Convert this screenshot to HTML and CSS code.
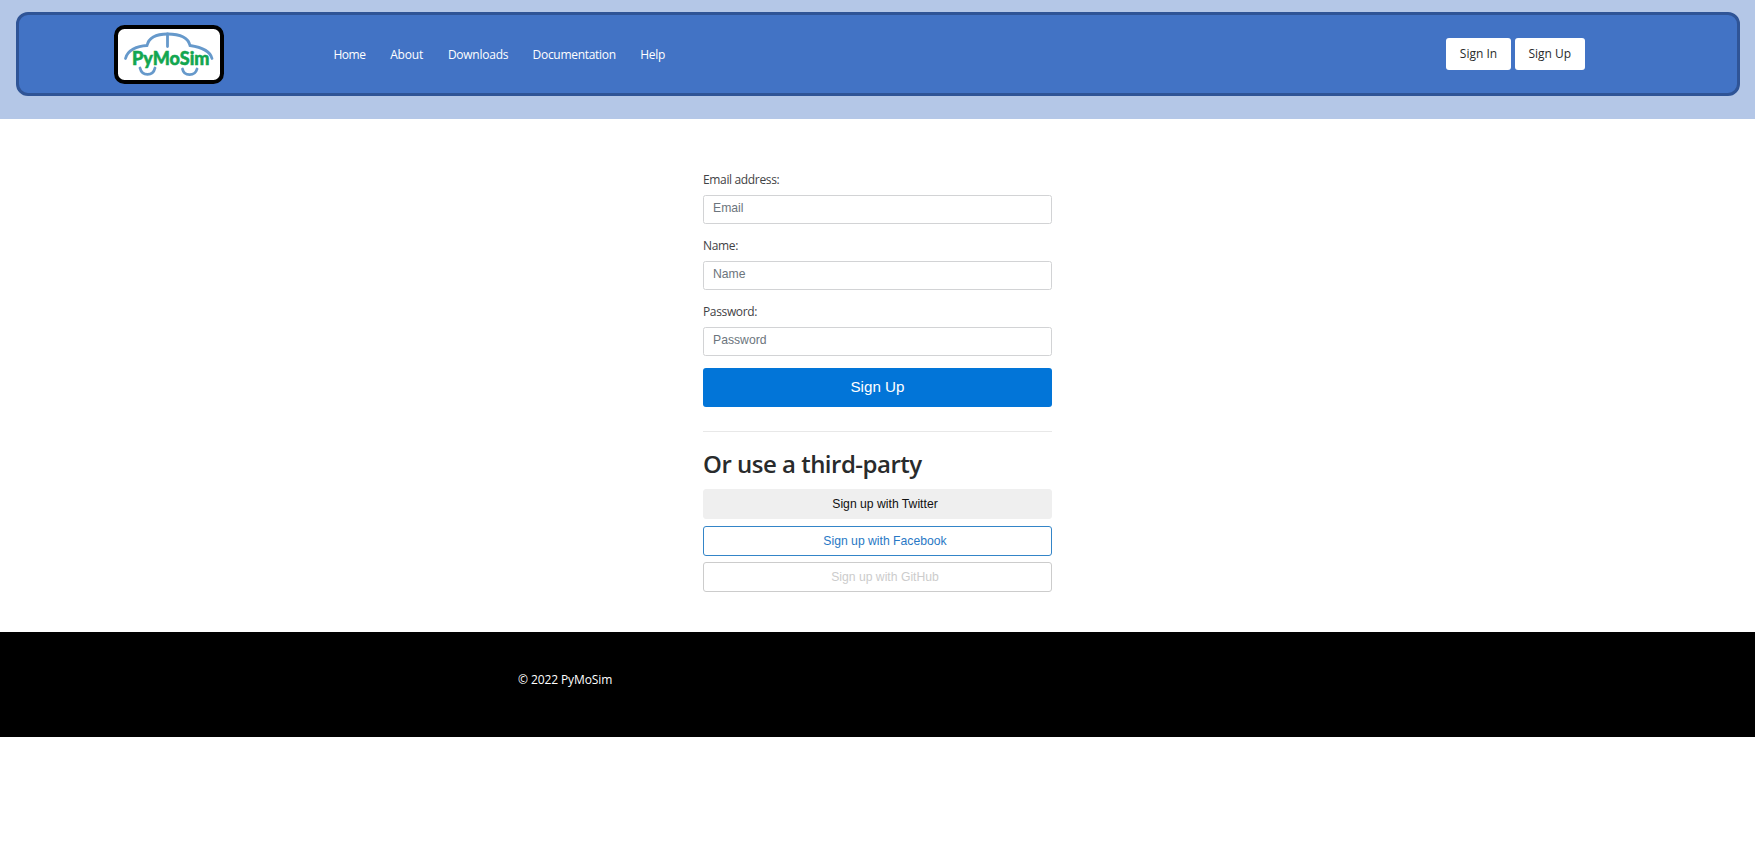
FILE: index.html
```
<!DOCTYPE html>
<html lang="en">
<head>
<meta charset="utf-8">
<title>PyMoSim</title>
<link rel="stylesheet" href="styles.css">
</head>
<body>
<header class="header">
  <div class="bar">
    <a class="logo" aria-label="PyMoSim">
      <svg width="110" height="59" viewBox="0 0 110 59">
        <rect x="2" y="2" width="106" height="55" rx="8.5" fill="#fff" stroke="#000" stroke-width="4"/>
        <g fill="none" stroke="#6699cb" stroke-width="2.8" stroke-linecap="round">
          <path d="M11.500 33.500C13.500 25 23 21 33 20.500C35 12 44 9 53.500 9C64 9 74 12 76 20.500C86 22 96 25 98 33.500"/>
          <path d="M53.500 9V21.500M26 43C28 51.500 39 51.500 41 43M68.500 44C70 51.500 81 51.500 83 44"/>
        </g>
        <text class="logo-text" x="18" y="40" textLength="77.500" lengthAdjust="spacing">PyMoSim</text>
      </svg>
    </a>
    <nav class="nav">
      <a class="home">Home</a><a class="about">About</a><a class="downloads">Downloads</a><a class="docs">Documentation</a><a class="help">Help</a>
    </nav>
    <div class="account"><a class="pill pill-in">Sign In</a><a class="pill pill-up">Sign Up</a></div>
  </div>
</header>
<main class="main">
  <form class="form">
    <label class="field"><span class="label">Email address:</span><input class="input" type="email" placeholder="Email"></label>
    <label class="field"><span class="label">Name:</span><input class="input" type="text" placeholder="Name"></label>
    <label class="field"><span class="label">Password:</span><input class="input" type="password" placeholder="Password"></label>
    <button class="submit" type="button">Sign Up</button>
  </form>
  <section class="social">
    <h2 class="title"><span>Or use a third-party</span></h2>
    <button class="provider twitter" type="button">Sign up with Twitter</button>
    <button class="provider facebook" type="button">Sign up with Facebook</button>
    <button class="provider github" type="button">Sign up with GitHub</button>
  </section>
</main>
<footer class="footer"><p class="copyright">© 2022 PyMoSim</p></footer>
</body>
</html>
```
FILE: styles.css
```
* { box-sizing: border-box; }
body { margin: 0; background: #fff; font-family: "Open Sans", "Noto Sans", sans-serif; font-size: 12px; color: #292b2c; }
.header { height: 119px; padding: 12px 16px 12px 15.500px; background: #b4c7e7; }
.bar { display: flex; align-items: center; width: 1724px; height: 84px; padding: 0 151.500px 0 95px; background: #4273c5; border: 3px solid #2f5496; border-radius: 12px; }
.logo { display: block; width: 110px; height: 59px; }
.logo svg { display: block; }
.logo-text { font-family: "Lato", sans-serif; font-size: 18px; font-weight: 900; fill: #12a650; stroke: #12a650; stroke-width: .5px; }
.nav { display: flex; gap: 24.700px; margin-left: 110px; padding-top: 2px; color: #fff; line-height: 20px; white-space: nowrap; }
.nav a { display: block; }
.home { width: 32px; letter-spacing: -.5px; }
.about { width: 33px; letter-spacing: -.2px; }
.downloads { width: 60px; letter-spacing: -.25px; }
.docs { width: 83px; letter-spacing: -.3px; }
.help { width: 25px; letter-spacing: -.25px; }
.account { display: flex; gap: 3.500px; margin-left: auto; }
.pill { height: 31.500px; border-radius: 3px; background: #fff; line-height: 31px; text-align: center; }
.pill-in { width: 65px; }
.pill-up { width: 70.500px; }
.main { display: flex; flex-direction: column; width: 349px; height: 513px; margin: 0 auto; padding-top: 50px; }
.form { display: flex; flex-direction: column; height: 263px; padding-bottom: 23px; border-bottom: 1px solid #e8e8e8; }
.field { display: flex; flex-direction: column; height: 65.800px; }
.label { height: 26px; line-height: 22px; letter-spacing: -.35px; color: #3f4245; }
.input { width: 100%; height: 29px; padding: 0 9px 3px; border: 1px solid #d2d3d5; border-radius: 2.500px; background: #fff; font: 12.200px "Liberation Sans", sans-serif; }
.input::placeholder { color: #6c757d; opacity: 1; }
.submit { height: 39px; margin-top: 1.200px; flex: none; padding: 0 0 2px; border: 0; border-radius: 3px; background: #0275d8; color: #fff; font: 15.200px "Liberation Sans", sans-serif; }
.title { height: 57px; margin: 0; padding-top: 14px; font-size: 24px; line-height: 36px; font-weight: 600; letter-spacing: -.5px; white-space: nowrap; }
.social { display: flex; flex-direction: column; }
.provider { height: 30px; margin-bottom: 6.500px; padding: 0 0 0 15px; border: 1px solid #efefef; border-radius: 3px; background: #fff; font: 12.200px "Liberation Sans", sans-serif; }
.twitter { background: #efefef; color: #111; }
.facebook { border-color: #3485c8; color: #2878c5; }
.github { border-color: #ccc; color: #ccc; padding-bottom: 1px; }
.footer { height: 104.500px; padding: 38px 0 0 518px; background: #000; color: #fff; }
.copyright { margin: 0; line-height: 20px; letter-spacing: -.1px; }
```
